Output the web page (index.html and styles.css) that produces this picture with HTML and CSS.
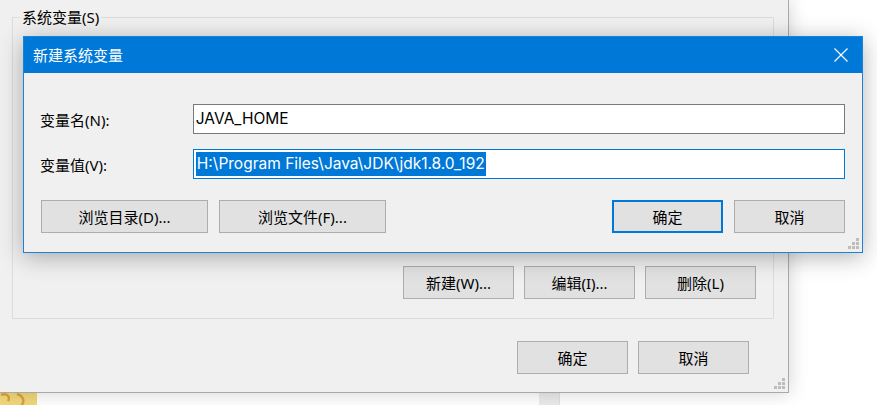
FILE: index.html
```html
<!DOCTYPE html>
<html lang="zh-CN">

<head>
    <meta charset="UTF-8">
    <link rel="stylesheet" href="styles.css">
    <title>新建系统变量</title>
</head>

<body>
    <div class="screen">
        <!-- Parent window: environment variables -->
        <div class="parent-window">
            <div class="group-box">
                <span class="group-title">系统变量(S)</span>
                <div class="group-buttons">
                    <button class="win-btn">新建(W)...</button>
                    <button class="win-btn">编辑(I)...</button>
                    <button class="win-btn">删除(L)</button>
                </div>
            </div>
            <div class="parent-buttons">
                <button class="win-btn">确定</button>
                <button class="win-btn">取消</button>
            </div>
            <svg class="grip grip-parent" width="11" height="11" viewBox="0 0 11 11">
                <rect x="8" y="0" width="3" height="3" />
                <rect x="4" y="4" width="3" height="3" />
                <rect x="8" y="4" width="3" height="3" />
                <rect x="0" y="8" width="3" height="3" />
                <rect x="4" y="8" width="3" height="3" />
                <rect x="8" y="8" width="3" height="3" />
            </svg>
        </div>

        <!-- Things behind the parent window -->
        <div class="desktop-strip">
            <svg class="desk-icon" width="37" height="13" viewBox="0 0 37 13">
                <rect width="37" height="13" fill="#f2d77a" />
                <path d="M1 2 C6 0 11 3 8 8" stroke="#d9a23a" stroke-width="2.4" fill="none" />
                <path d="M17 1 C24 3 25 9 21 13" stroke="#d9a23a" stroke-width="2.4" fill="none" />
            </svg>
            <div class="behind-panel"></div>
        </div>

        <!-- New system variable dialog -->
        <div class="dialog">
            <div class="title-bar">
                <span class="title-text">新建系统变量</span>
                <svg class="close-icon" width="16" height="16" viewBox="0 0 16 16">
                    <path d="M1.5 1.5 L14.5 14.5 M14.5 1.5 L1.5 14.5" stroke="#fff" stroke-width="1.2" />
                </svg>
            </div>
            <div class="dialog-body">
                <div class="field-row">
                    <label class="field-label">变量名(N):</label>
                    <div class="text-box">JAVA_HOME</div>
                </div>
                <div class="field-row">
                    <label class="field-label">变量值(V):</label>
                    <div class="text-box focused"><span class="selected">H:\Program Files\Java\JDK\jdk1.8.0_192</span></div>
                </div>
                <div class="dialog-buttons">
                    <button class="win-btn wide">浏览目录(D)...</button>
                    <button class="win-btn wide">浏览文件(F)...</button>
                    <div class="spacer"></div>
                    <button class="win-btn default">确定</button>
                    <button class="win-btn">取消</button>
                </div>
            </div>
            <svg class="grip grip-dialog" width="11" height="11" viewBox="0 0 11 11">
                <rect x="8" y="0" width="3" height="3" />
                <rect x="4" y="4" width="3" height="3" />
                <rect x="8" y="4" width="3" height="3" />
                <rect x="0" y="8" width="3" height="3" />
                <rect x="4" y="8" width="3" height="3" />
                <rect x="8" y="8" width="3" height="3" />
            </svg>
        </div>
    </div>
</body>

</html>
```

FILE: styles.css
```css
html,
body {
    margin: 0;
    padding: 0;
    background: #ffffff;
}

body {
    font-family: "Noto Sans", "Noto Sans CJK SC", sans-serif;
    font-size: 15px;
    color: #000;
}

.screen {
    position: relative;
    width: 877px;
    height: 405px;
    overflow: hidden;
}

/* parent window */
.parent-window {
    position: relative;
    box-sizing: border-box;
    width: 789px;
    height: 393px;
    background: #f0f0f0;
    border-right: 1px solid #a9a9a9;
    border-bottom: 1px solid #a9a9a9;
    box-shadow: 0 0 18px rgba(0, 0, 0, 0.18);
    padding-top: 17px;
    padding-left: 12px;
}

.group-box {
    position: relative;
    box-sizing: border-box;
    width: 762px;
    height: 302px;
    border: 1px solid #dcdcdc;
    display: flex;
    flex-direction: column;
    justify-content: flex-end;
    padding: 0 17px 19px 0;
}

.group-title {
    position: absolute;
    top: -11px;
    left: 7px;
    padding: 0 2px;
    background: #f0f0f0;
    line-height: 20px;
}

.group-buttons {
    display: flex;
    justify-content: flex-end;
    gap: 10px;
}

.parent-buttons {
    display: flex;
    justify-content: flex-end;
    gap: 10px;
    margin-top: 22px;
    margin-right: 39px;
}

.win-btn {
    box-sizing: border-box;
    width: 111px;
    height: 33px;
    padding: 0;
    background: #e1e1e1;
    border: 1px solid #adadad;
    font-family: inherit;
    font-size: 15px;
    color: #000;
}

.win-btn.wide {
    width: 167px;
}

.win-btn.default {
    border: 2px solid #0078d7;
}

.grip {
    position: absolute;
    fill: #bdbdbd;
}

.grip-parent {
    right: 3px;
    bottom: 3px;
}

.grip-dialog {
    right: 3px;
    bottom: 3px;
}

/* behind the parent */
.desktop-strip {
    display: flex;
    height: 12px;
}

.desk-icon {
    display: block;
}

.behind-panel {
    width: 20px;
    margin-left: 502px;
    background: #ebebeb;
    border-right: 1px solid #d4e4f4;
}

/* dialog */
.dialog {
    position: absolute;
    left: 23px;
    top: 36px;
    box-sizing: border-box;
    width: 840px;
    height: 217px;
    background: #f0f0f0;
    border: 1px solid #1a82d8;
    box-shadow: 0 4px 22px rgba(0, 0, 0, 0.3);
}

.title-bar {
    height: 36px;
    background: #0078d7;
    display: flex;
    align-items: center;
    padding: 0 13px 0 9px;
    color: #fff;
}

.title-text {
    flex: 1;
    line-height: 20px;
}

.close-icon {
    display: block;
}

.dialog-body {
    padding: 31px 17px 0 16px;
}

.field-row {
    display: flex;
    align-items: center;
    margin-bottom: 15px;
}

.field-label {
    width: 153px;
}

.text-box {
    box-sizing: border-box;
    width: 653px;
    height: 30px;
    background: #fff;
    border: 1px solid #7a7a7a;
    padding: 2px 2px;
    font-family: Inter, "Noto Sans", sans-serif;
    font-size: 15.5px;
    line-height: 24px;
    white-space: nowrap;
}

.text-box.focused {
    border-color: #0078d7;
}

.selected {
    display: inline-block;
    background: #0078d7;
    color: #fff;
    padding: 0 1px;
}

.dialog-buttons {
    display: flex;
    gap: 11px;
    margin-top: 21px;
    margin-left: 1px;
}

.spacer {
    flex: 1;
}
```
